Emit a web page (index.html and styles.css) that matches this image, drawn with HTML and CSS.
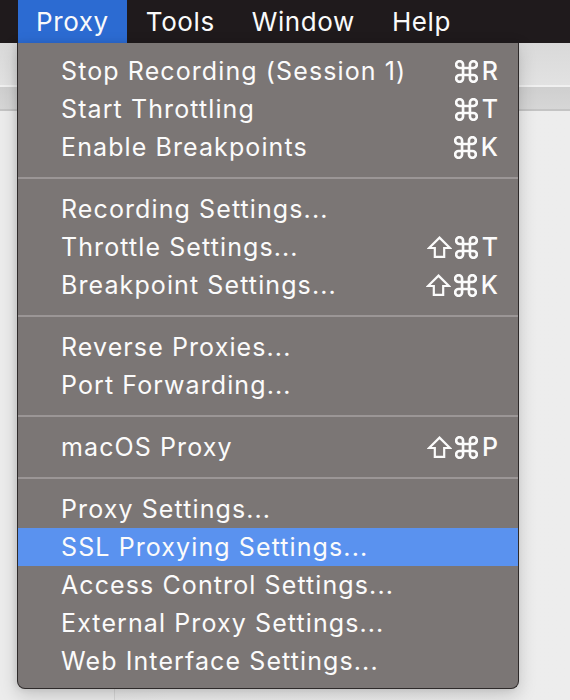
FILE: index.html
```html
<!DOCTYPE html>
<html>
<head>
<meta charset="utf-8">
<link rel="stylesheet" href="styles.css">
</head>
<body>
<div class="menubar">
  <div class="mb-item active">Proxy</div>
  <div class="mb-item">Tools</div>
  <div class="mb-item">Window</div>
  <div class="mb-item">Help</div>
</div>
<div class="window">
  <div class="toolbar"></div>
  <div class="tabbar"></div>
  <div class="content">
    <div class="sidebar"></div>
  </div>
</div>
<svg width="0" height="0" class="defs">
  <defs>
    <symbol id="cmd" viewBox="2 2 20 20"><path d="M15 6v12a3 3 0 1 0 3-3H6a3 3 0 1 0 3 3V6a3 3 0 1 0-3 3h12a3 3 0 1 0-3-3" fill="none" stroke="#fbfbfb" stroke-width="2.3"/></symbol>
    <symbol id="shift" viewBox="0 0 24 24"><path d="M12 2.5 L22 12.5 H16.5 V21 H7.5 V12.5 H2 Z" fill="none" stroke="#fbfbfb" stroke-width="2.1" stroke-linejoin="miter"/></symbol>
  </defs>
</svg>
<div class="menu">
  <div class="row"><span class="label">Stop Recording (Session 1)</span><span class="key"><svg class="ic"><use href="#cmd"/></svg>R</span></div>
  <div class="row"><span class="label">Start Throttling</span><span class="key"><svg class="ic"><use href="#cmd"/></svg>T</span></div>
  <div class="row"><span class="label">Enable Breakpoints</span><span class="key"><svg class="ic"><use href="#cmd"/></svg>K</span></div>
  <div class="sep"></div>
  <div class="row"><span class="label">Recording Settings...</span></div>
  <div class="row"><span class="label">Throttle Settings...</span><span class="key"><svg class="ic sh"><use href="#shift"/></svg><svg class="ic"><use href="#cmd"/></svg>T</span></div>
  <div class="row"><span class="label">Breakpoint Settings...</span><span class="key"><svg class="ic sh"><use href="#shift"/></svg><svg class="ic"><use href="#cmd"/></svg>K</span></div>
  <div class="sep"></div>
  <div class="row"><span class="label">Reverse Proxies...</span></div>
  <div class="row"><span class="label">Port Forwarding...</span></div>
  <div class="sep"></div>
  <div class="row"><span class="label">macOS Proxy</span><span class="key"><svg class="ic sh"><use href="#shift"/></svg><svg class="ic"><use href="#cmd"/></svg>P</span></div>
  <div class="sep"></div>
  <div class="row"><span class="label">Proxy Settings...</span></div>
  <div class="row selected"><span class="label">SSL Proxying Settings...</span></div>
  <div class="row"><span class="label">Access Control Settings...</span></div>
  <div class="row"><span class="label">External Proxy Settings...</span></div>
  <div class="row"><span class="label">Web Interface Settings...</span></div>
</div>
</body>
</html>
```
FILE: styles.css
```css
* { box-sizing: border-box; }
html, body {
  margin: 0;
  padding: 0;
  width: 570px;
  height: 700px;
  overflow: hidden;
  background: #ebebeb;
  font-family: Inter, "Liberation Sans", "DejaVu Sans", sans-serif;
  color: #fbfbfb;
}
.defs { position: absolute; }
.menubar {
  height: 43px;
  background: #1f1a1c;
  display: flex;
  align-items: stretch;
  padding-left: 18px;
}
.mb-item {
  font-size: 26px;
  letter-spacing: 0.6px;
  line-height: 43px;
  padding: 0 18px 0 19px;
  color: #fafafa;
}
.mb-item.active {
  background: #2c6bd2;
  padding: 0 18px 0 18px;
}
.window {
  display: flex;
  flex-direction: column;
  height: 657px;
}
.toolbar {
  height: 44px;
  background: linear-gradient(#d9d9d9, #e2e2e2);
  border-bottom: 2px solid #f0f0f0;
}
.tabbar {
  height: 24px;
  background: linear-gradient(#cfcfcf, #d6d6d6);
  border-bottom: 2px solid #c4c4c4;
}
.content {
  flex: 1;
  background: linear-gradient(90deg, #e6e6e6, #ececec 30%, #ededed);
  display: flex;
}
.sidebar {
  width: 115px;
  border-right: 1px solid #d8d8d8;
  background: #ececec;
}
.menu {
  position: absolute;
  left: 17px;
  top: 43px;
  width: 502px;
  height: 646px;
  background: #7b7675;
  border: 1px solid #2e2a2a;
  border-top: none;
  border-radius: 0 0 8px 8px;
  padding-top: 9px;
  box-shadow: 0 6px 18px rgba(0,0,0,0.18), -2px 0 6px rgba(0,0,0,0.08);
  display: flex;
  flex-direction: column;
}
.row {
  height: 38px;
  display: flex;
  align-items: center;
  justify-content: space-between;
  padding: 0 20px 0 43px;
  font-size: 25px;
  letter-spacing: 1.1px;
  white-space: nowrap;
}
.row.selected {
  background: #5a92ef;
}
.key {
  display: flex;
  align-items: center;
  font-size: 25px;
  font-weight: 500;
  letter-spacing: 0;
}
.ic {
  width: 23px;
  height: 23px;
  margin-right: 4px;
}
.ic.sh {
  width: 25px;
  height: 25px;
  margin-right: 3px;
}
.sep {
  height: 24px;
  display: flex;
  align-items: center;
}
.sep::before {
  content: "";
  display: block;
  width: 100%;
  height: 2px;
  background: #9b9696;
}
```
